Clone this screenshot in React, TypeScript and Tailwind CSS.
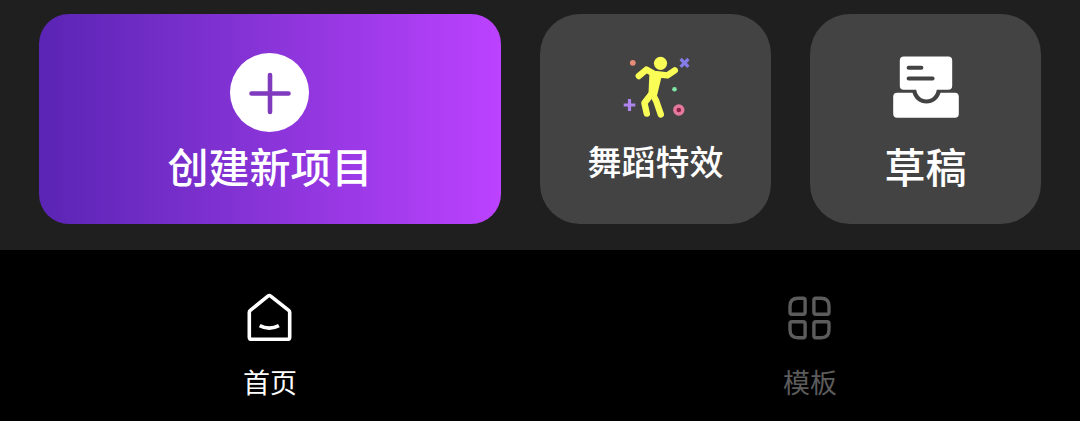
import React, { useState } from "react";

interface IconProps {
  className?: string;
}

const PlusCircleIcon: React.FC<IconProps> = ({ className = "" }) => (
  <svg viewBox="0 0 80 80" fill="none" aria-hidden="true" className={className}>
    <circle cx="39.5" cy="39.5" r="39.5" fill="#fff" />
    <path d="M40 22v37M21.5 40.5h37" stroke="#803ABD" strokeWidth="4.6" strokeLinecap="round" />
  </svg>
);

const DanceIcon: React.FC<IconProps> = ({ className = "" }) => (
  <svg viewBox="0 0 80 80" fill="none" aria-hidden="true" className={className}>
    <g stroke="#F9FD55" strokeWidth="6.4" strokeLinecap="round" strokeLinejoin="round">
      <path d="M22.8 23l7.6-6.4 8 4.4 13 1.4 7.4-5" />
      <path d="M34.6 42l-6.2 8 2.4 10.6" />
      <path d="M36.6 41l3.6 7 4.6 13.4" />
      <path d="M35.4 20.5l8.4 2-4.8 20-4.6-.4z" fill="#F9FD55" strokeWidth="4" />
    </g>
    <circle cx="44.5" cy="10.3" r="6.6" fill="#F9FD55" />
    <circle cx="16.8" cy="9.8" r="2.9" fill="#E68C78" />
    <circle cx="58.5" cy="36.2" r="2.3" fill="#80E6A5" />
    <path d="M64.6 6l7.8 7.8M72.4 6l-7.8 7.8" stroke="#857CE8" strokeWidth="3.2" />
    <path d="M13.5 46v12M7.7 52h11.6" stroke="#AE84EE" strokeWidth="3.2" />
    <circle cx="62.8" cy="57" r="4" fill="#8C2448" stroke="#E5789D" strokeWidth="3.4" />
  </svg>
);

const DraftIcon: React.FC<IconProps> = ({ className = "" }) => (
  <svg viewBox="0 0 80 80" fill="none" aria-hidden="true" className={className}>
    <path
      fill="#fff"
      d="M11.2 39.7h15.3c1.8 6.2 7.2 10.8 14 10.8s12.2-4.6 14-10.8h14.3a4 4 0 0 1 4 4v17a4 4 0 0 1-4 4H11.2a4 4 0 0 1-4-4v-17a4 4 0 0 1 4-4z"
    />
    <path
      fill="#fff"
      d="M17.8 3.6h44.4a4 4 0 0 1 4 4v25.1a4 4 0 0 1-4 4H50.8c-.8 5.7-5 9.8-10.3 9.8s-9.5-4.1-10.3-9.8H17.8a4 4 0 0 1-4-4V7.6a4 4 0 0 1 4-4z"
    />
    <path d="M22.6 14.7h12.8M22.6 25.4h24" stroke="#434343" strokeWidth="4" strokeLinecap="round" />
  </svg>
);

const HomeIcon: React.FC<IconProps> = ({ className = "" }) => (
  <svg
    viewBox="0 0 56 56"
    fill="none"
    stroke="currentColor"
    strokeWidth="3.6"
    strokeLinejoin="round"
    aria-hidden="true"
    className={className}
  >
    <path d="M25.9 6.1q1.4-1.2 2.8 0l18 14.3q1 .8 1 2.1v24.4q0 2.4-2.4 2.4H9.7q-2.4 0-2.4-2.4V22.5q0-1.3 1-2.1z" />
    <path d="M17.7 35.6q9.6 5 19.2 0" />
  </svg>
);

const TemplateIcon: React.FC<IconProps> = ({ className = "" }) => (
  <svg
    viewBox="0 0 56 56"
    fill="none"
    stroke="currentColor"
    strokeWidth="3.4"
    strokeLinejoin="round"
    aria-hidden="true"
    className={className}
  >
    <path d="M16 8.2h5.1q2 0 2 2v12q0 2-2 2H10Q8 24.2 8 22.2v-6q0-8 8-8z" />
    <path d="M39 8.2h-5.1q-2 0-2 2v12q0 2 2 2H45q2 0 2-2v-6q0-8-8-8z" />
    <path d="M16 47.8h5.1q2 0 2-2v-12q0-2-2-2H10q-2 0-2 2v6q0 8 8 8z" />
    <path d="M39 47.8h-5.1q-2 0-2-2v-12q0-2 2-2H45q2 0 2 2v6q0 8-8 8z" />
  </svg>
);

const navItems = [
  { name: "首页", icon: HomeIcon },
  { name: "模板", icon: TemplateIcon },
];

export const App: React.FC = () => {
  const [activeTab, setActiveTab] = useState("首页");

  return (
    <div className="min-h-screen bg-black font-['Noto_Sans_CJK_SC',sans-serif] text-white">
      <main className="grid grid-cols-[2fr_1fr_1fr] gap-[39px] bg-[#1f1f1f] px-[39px] pt-[14px] pb-[26px]">
        <button className="flex flex-col items-center rounded-[30px] bg-linear-to-r from-[#5A24B4] to-[#BC42FF] pt-[39px] pb-[35px] cursor-pointer">
          <PlusCircleIcon className="h-20 w-20" />
          <span className="mt-2 text-[41px] leading-12 font-medium">创建新项目</span>
        </button>

        <button className="flex flex-col items-center rounded-[40px] bg-[#434343] pt-[39px] pb-[35px] cursor-pointer">
          <DanceIcon className="h-20 w-20" />
          <span className="mt-2 text-[34px] leading-10 font-medium">舞蹈特效</span>
        </button>

        <button className="flex flex-col items-center rounded-[40px] bg-[#434343] pt-[39px] pb-[35px] cursor-pointer">
          <DraftIcon className="h-20 w-20" />
          <span className="mt-2 text-[41px] leading-12 font-medium">草稿</span>
        </button>
      </main>

      {/* Bottom tabs */}
      <nav className="grid grid-cols-2 pt-10 pb-4">
        {navItems.map((n) => (
          <button
            key={n.name}
            onClick={() => setActiveTab(n.name)}
            className={`flex flex-col items-center cursor-pointer ${activeTab === n.name ? "text-white" : "text-[#5c5c5c]"}`}
          >
            <n.icon className="h-14 w-14" />
            <span className="mt-[18px] text-[27px] leading-9">{n.name}</span>
          </button>
        ))}
      </nav>
    </div>
  );
};

export default App;
